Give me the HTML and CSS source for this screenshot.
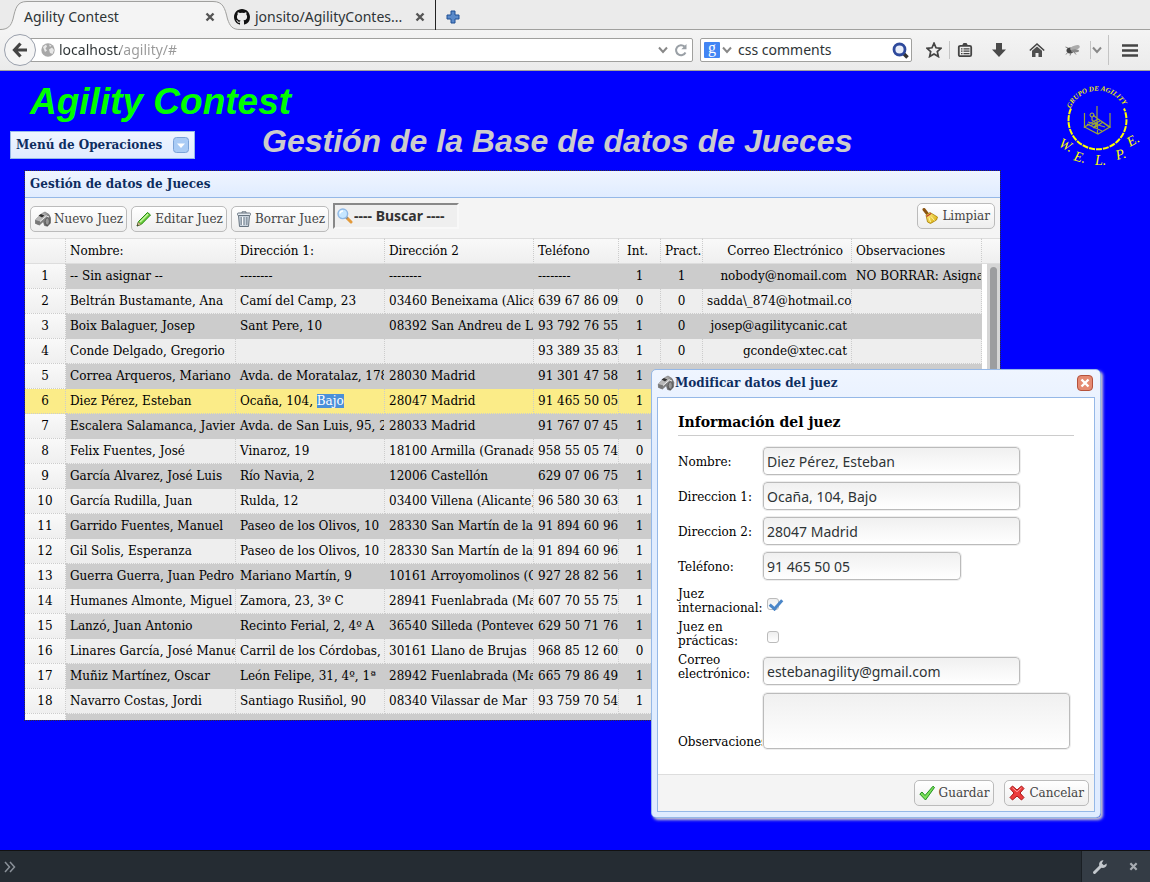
FILE: index.html
```html
<!DOCTYPE html>
<html lang="es">
<head>
<meta charset="utf-8">
<title>Agility Contest</title>
<link rel="stylesheet" href="styles.css">
</head>
<body>
<svg class="defs" aria-hidden="true">
  <defs>
    <linearGradient id="metal" x1="0" y1="0" x2="1" y2="1"><stop offset="0" stop-color="#e4e4e4"/><stop offset=".5" stop-color="#8a8a8a"/><stop offset="1" stop-color="#3a3a3a"/></linearGradient>
    <linearGradient id="gold" x1="0" y1="0" x2="1" y2="1"><stop offset="0" stop-color="#fff08a"/><stop offset="1" stop-color="#d6a800"/></linearGradient>
  </defs>
  <symbol id="whistle" viewBox="0 0 16 16">
    <path d="M.3 9 7 2.500 10 1 14 3.500 15.800 7.500 15.500 12 12.500 15.300 9.500 14.500 8.300 10.500 4.500 14 .5 12.500z" fill="url(#metal)" stroke="#666" stroke-width=".6"/>
    <path d="M.3 9 7 2.500 12 4.500 5 10.500z" fill="#b9b9b9"/>
    <path d="M.3 9 5 10.500 4.500 14 .5 12.500z" fill="#777"/>
    <path d="M3.500 4.500 6 3l3.500 1.500L7 6.500" fill="#333"/>
    <path d="M5 10.500 11.500 5 14 6" fill="none" stroke="#eee"/>
    <ellipse cx="12.300" cy="10.500" rx="2" ry="3.500" fill="#999" stroke="#555" stroke-width=".7"/>
  </symbol>
  <symbol id="pencil" viewBox="0 0 16 16">
    <path d="M1 15 2.500 10.500 11.500 1.500 14.500 4 5.500 13.200z" fill="#6cce3c" stroke="#248a10"/>
    <path d="M4 11 12 3" stroke="#c8f7a5" stroke-width="1.500"/>
    <path d="M1 15 2.300 11.200 4.900 13.500z" fill="#e8c89a" stroke="#7a6a50" stroke-width=".6"/>
    <path d="M1 15 1.600 13.200 2.900 14.300z" fill="#222"/>
  </symbol>
  <symbol id="trash" viewBox="0 0 16 16">
    <path d="M2.500 4.500h11l-1 11h-9z" fill="#c9d3dd" stroke="#66737f"/>
    <path d="M5.200 6v8M8 6v8M10.800 6v8" stroke="#7d8a97" stroke-width="1.200"/>
    <path d="M6.600 6v8" stroke="#fff"/>
    <rect x="1.500" y="2" width="13" height="2.500" rx="1" fill="#e4eaf0" stroke="#66737f"/>
    <path d="M6 2V.8h4V2" fill="none" stroke="#66737f"/>
  </symbol>
  <symbol id="lens" viewBox="0 0 16 16">
    <path d="M9.500 9.500 14 14" stroke="#e39a3b" stroke-width="3" stroke-linecap="round"/>
    <path d="M9 9 10.500 10.500" stroke="#888" stroke-width="2"/>
    <circle cx="5.800" cy="5.800" r="4.800" fill="#c6e6ff" stroke="#8fb8e6" stroke-width="1.400"/>
    <path d="M3 5.500a3 3 0 0 1 3-2.500" fill="none" stroke="#fff" stroke-width="1.400"/>
  </symbol>
  <symbol id="broom" viewBox="0 0 16 16">
    <path d="M2 1.500 5.500 6" stroke="#8a5310" stroke-width="3" stroke-linecap="round"/>
    <path d="M4 7 8 4.500 15.500 9 14.500 12 8.500 15.500 5.500 14z" fill="url(#gold)" stroke="#a87f00" stroke-width=".8"/>
    <path d="M4.500 8.500 9 5.500" stroke="#c0392b" stroke-width="1.400"/>
    <path d="M7 9.500 8.500 14M9 8.500 12.500 12.500" stroke="#fff5a8"/>
  </symbol>
  <symbol id="ok" viewBox="0 0 16 16">
    <path d="M.8 9 3 7 6 10.500 14 1.200 15.500 2.500 6.500 15z" fill="#7be05a" stroke="#1f8f1f"/>
  </symbol>
  <symbol id="cancel" viewBox="0 0 16 16">
    <path d="M3.500 1 8 5 12.500 1 15 3.500 11 8 15 12.500 12.500 15 8 11 3.500 15 1 12.500 5 8 1 3.500z" fill="#ec3b3b" stroke="#a81414"/>
    <path d="M3.500 2.800 8 6.800 12.500 2.800" fill="none" stroke="#ff9a9a"/>
  </symbol>
  <symbol id="close" viewBox="0 0 10 10"><path d="M1.500 1.500 8.500 8.500M8.500 1.500 1.500 8.500" stroke="currentColor" stroke-width="2.400"/></symbol>
  <symbol id="chevron" viewBox="0 0 10 8"><path d="M1 1.500 5 6 9 1.500" fill="none" stroke="#888" stroke-width="2"/></symbol>
</svg>
<div class="browser">
  <nav class="tabs" aria-label="Pestañas">
    <div class="tab tab-active">
      <svg class="tab-shape" viewBox="0 0 240 30" preserveAspectRatio="none"><path d="M0 29.500C8 29.500 11 26 13 19 15.500 8 17 1.500 27 1.500H213C223 1.500 225 8 227.500 19 230 26 232 29.500 240 29.500V30H0z" fill="#f4f4f4"/><path d="M0 29.500C8 29.500 11 26 13 19 15.500 8 17 1.500 27 1.500H213C223 1.500 225 8 227.500 19 230 26 232 29.500 240 29.500" fill="none" stroke="#a0a09e"/></svg>
      <span class="tab-title">Agility Contest</span>
      <button class="tab-close" aria-label="Cerrar pestaña"><svg width="10" height="10"><use href="#close"/></svg></button>
    </div>
    <div class="tab tab-back">
      <svg width="16" height="16" viewBox="0 0 16 16"><path d="M8 0C3.580 0 0 3.580 0 8c0 3.540 2.290 6.530 5.470 7.590.4.070.55-.17.55-.38v-1.490c-2.230.48-2.700-.96-2.700-.96-.36-.92-.89-1.170-.89-1.170-.73-.5.050-.49.050-.49.810.060 1.230.83 1.230.83.720 1.230 1.880.87 2.340.67.070-.52.280-.88.510-1.080-1.780-.2-3.640-.89-3.640-3.950 0-.87.310-1.590.82-2.150-.08-.2-.36-1.020.080-2.120 0 0 .67-.22 2.200.82a7.600 7.600 0 0 1 4 0c1.530-1.040 2.200-.82 2.200-.82.440 1.100.160 1.920.080 2.120.510.560.820 1.270.820 2.150 0 3.070-1.870 3.750-3.650 3.950.290.250.540.730.540 1.480v2.200c0 .21.150.46.550.38A8 8 0 0 0 16 8c0-4.420-3.580-8-8-8z" fill="#111"/></svg>
      <span class="tab-title">jonsito/AgilityContes...</span>
      <button class="tab-close" aria-label="Cerrar pestaña"><svg width="10" height="10"><use href="#close"/></svg></button>
    </div>
    <button class="tab-new" aria-label="Nueva pestaña"><svg width="14" height="14" viewBox="0 0 14 14"><path d="M5 1h4v4h4v4H9v4H5V9H1V5h4z" fill="#5b8ac9" stroke="#1f4f94"/></svg></button>
  </nav>
  <div class="navbar">
    <button class="back" aria-label="Atrás"><svg width="16" height="16" viewBox="0 0 16 16"><path d="M8.500 1.500 2.500 8l6 6.500M2.500 8H15" fill="none" stroke="#444" stroke-width="3.200"/></svg></button>
    <div class="urlbar">
      <svg width="14" height="14" viewBox="0 0 14 14"><circle cx="7" cy="7" r="6.700" fill="#a8a8a8"/><path d="M2 4 5 1.500 6 3.500 4.500 5.500 6 7.500 4 9 3 6.500zM8 6.500 11 4.500 13 7 11.500 11 9 10zM8 1.500 10.500 2.500 9 4z" fill="#e8e8e8"/></svg>
      <input class="url-text" type="text" value="localhost/agility/#" aria-label="Dirección">
      <svg width="10" height="8"><use href="#chevron"/></svg>
      <svg width="14" height="14" viewBox="0 0 14 14"><path d="M11.500 9.500A5 5 0 1 1 10.500 3.500" fill="none" stroke="#9aa0a6" stroke-width="2"/><path d="M12.500 1V6.200H7.300z" fill="#9aa0a6"/></svg>
    </div>
    <div class="searchbar">
      <span class="engine">g</span>
      <svg width="10" height="8"><use href="#chevron"/></svg>
      <input class="search-text" type="text" value="css comments" aria-label="Buscar en la web">
      <svg width="17" height="17" viewBox="0 0 17 17"><path d="M11 11 15.500 15.500" stroke="#333" stroke-width="3.500"/><circle cx="7.500" cy="7.500" r="5.500" fill="#e9eefa" stroke="#2e4a9c" stroke-width="2.800"/></svg>
    </div>
    <div class="tools">
      <button class="tool" aria-label="Marcador"><svg width="16" height="16" viewBox="0 0 16 16"><path d="M8 1.200 10 5.800 15 6.300 11.300 9.600 12.400 14.600 8 12 3.600 14.600 4.700 9.600 1 6.300 6 5.800z" fill="none" stroke="#444" stroke-width="1.700"/></svg></button>
      <span class="sep"></span>
      <button class="tool" aria-label="Lista"><svg width="16" height="16" viewBox="0 0 16 16"><rect x="1.800" y="3.800" width="12.400" height="10.400" rx="1.500" fill="#eee" stroke="#444" stroke-width="1.800"/><path d="M5 3.500 6.500 1h3L11 3.500z" fill="#444"/><path d="M4 6.800h1.500M4 9.200h1.500M4 11.600h1.500M6.500 6.800h6M6.500 9.200h6M6.500 11.600h6" stroke="#444" stroke-width="1.300"/></svg></button>
      <button class="tool tool-wide" aria-label="Descargas"><svg width="16" height="16" viewBox="0 0 16 16"><path d="M5 1h6v6.500h4L8 15 1 7.500h4z" fill="#4a4a4a"/></svg></button>
      <button class="tool tool-wide" aria-label="Inicio"><svg width="16" height="16" viewBox="0 0 16 16"><path d="M.8 8.500 8 2 15.200 8.500" fill="none" stroke="#444" stroke-width="1.600"/><path d="M3 8.800 8 4.500l5 4.300V15H9.500v-4h-3v4H3z" fill="#4f4f4f"/></svg></button>
      <button class="tool tool-bug" aria-label="Firebug"><svg width="16" height="12" viewBox="0 0 16 12"><ellipse cx="5" cy="6.500" rx="3.500" ry="3" fill="#444"/><ellipse cx="10" cy="3.800" rx="5" ry="2.200" fill="#aaa" transform="rotate(-18 10 4)"/><ellipse cx="10" cy="6.800" rx="4" ry="1.600" fill="#888"/><path d="M3 8 1 10.500M6 8.500 5 11.500M8.500 7.500 11 10.500M3 4 .5 3" stroke="#777" stroke-width=".9"/></svg></button>
      <span class="sep"></span>
      <button class="tool tool-narrow" aria-label="Más"><svg width="10" height="8"><use href="#chevron"/></svg></button>
      <span class="sep sep-tall"></span>
      <button class="tool tool-menu" aria-label="Menú"><svg width="16" height="13" viewBox="0 0 16 13"><path d="M0 1.500h16M0 6.500h16M0 11.500h16" stroke="#444" stroke-width="2.600"/></svg></button>
    </div>
  </div>

  <main class="page">
    <header class="banner">
      <h1 class="brand">Agility Contest</h1>
      <button class="menu-toggle">Menú de Operaciones
        <svg width="16" height="16" viewBox="0 0 16 16"><rect x=".5" y=".5" width="15" height="15" rx="3" fill="#a9cbf5" stroke="#7ba3d8"/><path d="M4 6.500h8L8 11z" fill="#fff"/></svg>
      </button>
      <h2 class="section-title">Gestión de la Base de datos de Jueces</h2>
      <svg class="logo" width="100" height="90" viewBox="0 0 100 90">
        <path id="ring" d="M20.500 27.500A29.500 29.500 0 0 1 76 31" fill="none"/>
        <text class="logo-arc"><textPath href="#ring">GRUPO DE AGILITY</textPath></text>
        <path d="M21 27.500A29 29 0 1 0 74 27.500" fill="none" stroke="#ff0" stroke-width="2" stroke-dasharray="6 1"/>
        <path d="M47 25v19M60 32v15M34.500 32v15M47.500 41v12M34.500 46 48 53 60 46 48 38zM37 43 52 50M38 41 55 46M43 34l5 4 3 2 8 6M42 36v3l5 4-4 4M44 47l9-6M40 45l10-5" fill="none" stroke="#9aa53a" stroke-width="1.200"/>
        <circle cx="42" cy="34" r="2" fill="none" stroke="#b5bf30"/>
        <g class="logo-word">
          <text transform="translate(8 65) rotate(28)">W.</text>
          <text transform="translate(23 79) rotate(16)">E.</text>
          <text transform="translate(45 84)">L.</text>
          <text transform="translate(67 79) rotate(-16)">P.</text>
          <text transform="translate(80 66) rotate(-30)">E.</text>
        </g>
      </svg>
    </header>

    <section class="panel">
      <h3 class="panel-title">Gestión de datos de Jueces</h3>
      <div class="toolbar">
        <button class="btn btn-low"><svg width="16" height="16"><use href="#whistle"/></svg>Nuevo Juez</button>
        <button class="btn btn-low"><svg width="16" height="16"><use href="#pencil"/></svg>Editar Juez</button>
        <button class="btn btn-low"><svg width="16" height="16"><use href="#trash"/></svg>Borrar Juez</button>
        <label class="finder"><svg width="16" height="16"><use href="#lens"/></svg><input type="text" value="---- Buscar ----" aria-label="Buscar"></label>
        <button class="btn btn-right"><svg width="16" height="16"><use href="#broom"/></svg>Limpiar</button>
      </div>
      <div class="grid">
        <table class="judges">
          <colgroup><col class="c-num"><col class="c-name"><col class="c-addr"><col class="c-addr"><col class="c-tel"><col class="c-flag"><col class="c-flag"><col class="c-addr"><col></colgroup>
          <thead><tr><th></th><th>Nombre:</th><th>Dirección 1:</th><th>Dirección 2</th><th>Teléfono</th><th class="mid">Int.</th><th class="mid">Pract.</th><th class="end">Correo Electrónico</th><th>Observaciones</th></tr></thead>
          <tbody>
            <tr><th>1</th><td>-- Sin asignar --</td><td>--------</td><td>--------</td><td>--------</td><td>1</td><td>1</td><td>nobody@nomail.com</td><td>NO BORRAR: Asignado</td></tr>
            <tr><th>2</th><td>Beltrán Bustamante, Ana</td><td>Camí del Camp, 23</td><td>03460 Beneixama (Alicante)</td><td>639 67 86 09</td><td>0</td><td>0</td><td class="long">sadda\_874@hotmail.com</td><td></td></tr>
            <tr><th>3</th><td>Boix Balaguer, Josep</td><td>Sant Pere, 10</td><td>08392 San Andreu de Llavaneres</td><td>93 792 76 55</td><td>1</td><td>0</td><td>josep@agilitycanic.cat</td><td></td></tr>
            <tr><th>4</th><td>Conde Delgado, Gregorio</td><td></td><td></td><td>93 389 35 83</td><td>1</td><td>0</td><td>gconde@xtec.cat</td><td></td></tr>
            <tr><th>5</th><td>Correa Arqueros, Mariano</td><td>Avda. de Moratalaz, 178</td><td>28030 Madrid</td><td>91 301 47 58</td><td>1</td><td></td><td></td><td></td></tr>
            <tr class="selected"><th>6</th><td>Diez Pérez, Esteban</td><td>Ocaña, 104, <mark>Bajo</mark></td><td>28047 Madrid</td><td>91 465 50 05</td><td>1</td><td></td><td></td><td></td></tr>
            <tr><th>7</th><td>Escalera Salamanca, Javier</td><td>Avda. de San Luis, 95, 2</td><td>28033 Madrid</td><td>91 767 07 45</td><td>1</td><td></td><td></td><td></td></tr>
            <tr><th>8</th><td>Felix Fuentes, José</td><td>Vinaroz, 19</td><td>18100 Armilla (Granada)</td><td>958 55 05 74</td><td>0</td><td></td><td></td><td></td></tr>
            <tr><th>9</th><td>García Alvarez, José Luis</td><td>Río Navia, 2</td><td>12006 Castellón</td><td>629 07 06 75</td><td>1</td><td></td><td></td><td></td></tr>
            <tr><th>10</th><td>García Rudilla, Juan</td><td>Rulda, 12</td><td>03400 Villena (Alicante)</td><td>96 580 30 63</td><td>1</td><td></td><td></td><td></td></tr>
            <tr><th>11</th><td>Garrido Fuentes, Manuel</td><td>Paseo de los Olivos, 10</td><td>28330 San Martín de la Vega</td><td>91 894 60 96</td><td>1</td><td></td><td></td><td></td></tr>
            <tr><th>12</th><td>Gil Solis, Esperanza</td><td>Paseo de los Olivos, 10</td><td>28330 San Martín de la Vega</td><td>91 894 60 96</td><td>1</td><td></td><td></td><td></td></tr>
            <tr><th>13</th><td>Guerra Guerra, Juan Pedro</td><td>Mariano Martín, 9</td><td>10161 Arroyomolinos (Cáceres)</td><td>927 28 82 56</td><td>1</td><td></td><td></td><td></td></tr>
            <tr><th>14</th><td>Humanes Almonte, Miguel</td><td>Zamora, 23, 3º C</td><td>28941 Fuenlabrada (Madrid)</td><td>607 70 55 75</td><td>1</td><td></td><td></td><td></td></tr>
            <tr><th>15</th><td>Lanzó, Juan Antonio</td><td>Recinto Ferial, 2, 4º A</td><td>36540 Silleda (Pontevedra)</td><td>629 50 71 76</td><td>1</td><td></td><td></td><td></td></tr>
            <tr><th>16</th><td>Linares García, José Manuel</td><td>Carril de los Córdobas, 8</td><td>30161 Llano de Brujas</td><td>968 85 12 60</td><td>0</td><td></td><td></td><td></td></tr>
            <tr><th>17</th><td>Muñiz Martínez, Oscar</td><td>León Felipe, 31, 4º, 1ª</td><td>28942 Fuenlabrada (Madrid)</td><td>665 79 86 49</td><td>1</td><td></td><td></td><td></td></tr>
            <tr><th>18</th><td>Navarro Costas, Jordi</td><td>Santiago Rusiñol, 90</td><td>08340 Vilassar de Mar</td><td>93 759 70 54</td><td>1</td><td></td><td></td><td></td></tr>
            <tr><th>19</th><td>Navarro Sanchez, Rafael</td><td>Castillo de Hidalgo</td><td>47012 Zaratan (Valladolid)</td><td></td><td></td><td></td><td></td><td></td></tr>
          </tbody>
        </table>
        <div class="scroll"><div class="track"><div class="thumb"></div></div></div>
      </div>
    </section>

    <section class="dialog" role="dialog" aria-labelledby="dlg-title">
      <header class="dialog-head">
        <svg width="18" height="16"><use href="#whistle"/></svg>
        <h3 id="dlg-title">Modificar datos del juez</h3>
        <button class="dialog-close" aria-label="Cerrar"><svg width="10" height="10"><use href="#close"/></svg></button>
      </header>
      <form class="dialog-body">
        <div class="fields">
          <h4 class="form-title">Información del juez</h4>
          <div class="row"><label for="f1">Nombre:</label><input class="box" id="f1" type="text" value="Diez Pérez, Esteban"></div>
          <div class="row"><label for="f2">Direccion 1:</label><input class="box" id="f2" type="text" value="Ocaña, 104, Bajo"></div>
          <div class="row"><label for="f3">Direccion 2:</label><input class="box" id="f3" type="text" value="28047 Madrid"></div>
          <div class="row"><label for="f4">Teléfono:</label><input class="box box-short" id="f4" type="text" value="91 465 50 05"></div>
          <div class="row row-check"><label for="f5">Juez internacional:</label><input class="check" id="f5" type="checkbox" checked></div>
          <div class="row row-check"><label for="f6">Juez en prácticas:</label><input class="check" id="f6" type="checkbox"></div>
          <div class="row row-mail"><label for="f7">Correo electrónico:</label><input class="box" id="f7" type="text" value="estebanagility@gmail.com"></div>
          <div class="row row-notes"><label for="f8">Observaciones:</label><textarea class="box box-notes" id="f8"></textarea></div>
        </div>
        <footer class="dialog-foot">
          <button type="button" class="btn"><svg width="16" height="16"><use href="#ok"/></svg>Guardar</button>
          <button type="button" class="btn"><svg width="16" height="16"><use href="#cancel"/></svg>Cancelar</button>
        </footer>
      </form>
    </section>
  </main>

  <footer class="devbar">
    <svg class="prompt" width="12" height="12" viewBox="0 0 12 12"><path d="M1 1 5.500 6 1 11M6 1l4.500 5L6 11" fill="none" stroke="#8a9199" stroke-width="1.500"/></svg>
    <div class="devtools">
      <button aria-label="Herramientas"><svg width="16" height="16" viewBox="0 0 16 16"><path d="M2.500 13.500 9 7" stroke="#c3c8cd" stroke-width="3" stroke-linecap="round"/><path d="M11.500 1.200 9.800 4.200 11.800 6.200 14.800 4.500A4 4 0 0 1 9 8.500L7.500 7A4 4 0 0 1 11.500 1.200z" fill="#c3c8cd"/></svg></button>
      <button class="dev-close" aria-label="Cerrar barra"><svg width="9" height="9"><use href="#close"/></svg></button>
    </div>
  </footer>
</div>
</body>
</html>
```
FILE: styles.css
```css
* { box-sizing: border-box; }
body {
  margin: 0;
  font: 12px/14px "DejaVu Serif", serif;
  color: #000;
}
h1, h2, h3, h4 { margin: 0; }
button, input, textarea { font: inherit; color: inherit; margin: 0; }
button { padding: 0; border: 0; background: none; }
svg { display: block; flex: none; }
.defs { position: absolute; width: 0; height: 0; }
.browser { display: flex; flex-direction: column; height: 100vh; }

/* Browser chrome */
.tabs {
  display: flex;
  height: 30px;
  background: linear-gradient(#ebebeb, #ebebeb 29px, #a0a09e 29px);
  font: 14px/20px "Noto Sans", sans-serif;
  color: #2e3436;
}
.tab { display: flex; align-items: center; padding-top: 3px; }
.tab-active { position: relative; width: 234px; padding-left: 24px; padding-right: 18px; }
.tab-shape { position: absolute; left: 0; top: 0; width: 240px; height: 30px; }
.tab-title { position: relative; flex: 1; white-space: nowrap; }
.tab-close { position: relative; color: #555; padding: 0 1px; }
.tab-back {
  width: 202px;
  gap: 5px;
  padding-right: 9px;
  border-right: 1px solid #222;
}
.tab-new { padding: 3px 10px 0; }
.navbar {
  display: flex;
  align-items: center;
  height: 41px;
  background: linear-gradient(#f4f4f4, #ebebeb);
  border-bottom: 1px solid #a0a09e;
  font: 14px/20px "Noto Sans", sans-serif;
  color: #2e3436;
}
.back {
  position: relative;
  display: grid;
  place-items: center;
  width: 32px;
  height: 32px;
  margin-left: 4px;
  border: 1px solid #9aa0ac;
  border-radius: 50%;
  background: #f5f5f5;
}
.urlbar, .searchbar {
  display: flex;
  align-items: center;
  height: 24px;
  background: #fff;
  border: 1px solid #a0a09e;
  border-radius: 0 2px 2px 0;
}
.urlbar { flex: 1; gap: 6px; margin-left: -6px; padding: 0 4px 0 10px; }
.urlbar input, .searchbar input {
  flex: 1;
  min-width: 0;
  padding: 0;
  border: 0;
  background: none;
  outline: 0;
}
.urlbar .url-text {
  margin-left: -2px;
  color: transparent;
  background: linear-gradient(90deg, #2e3436 61px, #999 61px);
  -webkit-background-clip: text;
  background-clip: text;
}
.searchbar { width: 212px; margin-left: 7px; padding: 0 2px 0 3px; gap: 2px; border-radius: 2px; }
.search-text { text-indent: 4px; }
.engine {
  width: 16px;
  height: 16px;
  border-radius: 1px;
  background: #4285f4;
  color: #fff;
  text-align: center;
  font: 16px/12px "Liberation Serif", serif;
}
.tools { display: flex; align-items: center; margin-left: 7px; }
.tool { display: grid; place-items: center; width: 30px; height: 24px; }
.tool-wide { width: 38px; }
.tool-bug { width: 34px; }
.tool-narrow { width: 12px; }
.tool-menu { width: 41px; }
.sep { width: 1px; height: 18px; background: #c4c4c4; }
.sep-tall { height: 30px; margin-left: 5px; }

/* Page */
.page {
  position: relative;
  display: flex;
  flex-direction: column;
  flex: 1;
  min-height: 0;
  padding: 10px 0 129px;
  background: #00f;
}
.banner {
  display: grid;
  grid-template-columns: 252px 1fr 100px;
  grid-template-rows: 42px 47px;
  padding-left: 10px;
}
.brand {
  grid-column: 1 / 3;
  padding-left: 20px;
  font: italic bold 37px/42px "Liberation Sans", sans-serif;
  color: #0f0;
}
.section-title {
  grid-area: 2 / 2;
  font: italic bold 32px/36px "Liberation Sans", sans-serif;
  color: #ccc;
}
.logo { grid-area: 1 / 3 / 3 / 4; }
.logo-arc { font: italic bold 7px "Liberation Serif", serif; fill: #ee0; }
.logo-word { font: italic 14px "Liberation Serif", serif; fill: #ff0; }
.menu-toggle {
  grid-area: 2 / 1;
  justify-self: start;
  display: flex;
  align-items: center;
  justify-content: space-between;
  width: 185px;
  height: 28px;
  margin-top: 8px;
  padding: 0 5px;
  border: 1px solid #95b8e7;
  background: linear-gradient(#eff5ff, #e0ecff);
  font: bold 12px/16px "DejaVu Serif", serif;
  color: #0e2d5f;
}

/* Data grid panel */
.panel {
  display: flex;
  flex-direction: column;
  flex: 1;
  min-height: 0;
  margin: 0 149px 0 24px;
  border: 1px dotted #333;
  background: #f4f4f4 padding-box;
  overflow: hidden;
}
.panel-title {
  flex: none;
  height: 27px;
  padding-left: 5px;
  background: linear-gradient(#eff5ff, #e0ecff);
  border-bottom: 1px solid #95b8e7;
  font: bold 12px/26px "DejaVu Serif", serif;
  color: #0e2d5f;
}
.toolbar {
  display: flex;
  align-items: flex-start;
  flex: none;
  gap: 4px;
  height: 40px;
  padding: 5px;
}
.btn {
  display: flex;
  align-items: center;
  gap: 4px;
  height: 26px;
  padding: 0 4px;
  border: 1px solid #bbb;
  border-radius: 5px;
  background: linear-gradient(#fff, #eee);
  color: #444;
}
.btn-low { gap: 3px; margin-top: 3px; padding-right: 3px; }
.btn-right { margin-left: auto; }
.finder {
  display: flex;
  align-items: center;
  width: 126px;
  height: 26px;
  padding: 0 2px;
  border: 2px solid;
  border-color: #888 #f8f8f8 #f8f8f8 #888;
  background: #efefef;
}
.finder input {
  flex: 1;
  min-width: 0;
  padding: 0 1px;
  border: 0;
  background: none;
  font: bold 14px/20px "Noto Sans", sans-serif;
  color: #333;
}
.grid { display: flex; flex: 1; min-height: 0; overflow: hidden; }
.judges {
  flex: 1;
  align-self: flex-start;
  width: 100%;
  table-layout: fixed;
  border-spacing: 0;
}
.c-num { width: 41px; }
.c-name { width: 170px; }
.c-addr { width: 149px; }
.c-tel { width: 85px; }
.c-flag { width: 42px; }
.judges th, .judges td {
  height: 25px;
  padding: 0 0 0 4px;
  border-right: 1px dotted #ccc;
  border-bottom: 1px dotted #ccc;
  font-weight: normal;
  text-align: left;
  white-space: nowrap;
  overflow: hidden;
}
.judges thead th {
  height: 26px;
  border-top: 1px solid #ddd;
  border-bottom: 1px solid #ddd;
  background: linear-gradient(#f9f9f9, #efefef);
}
.judges thead .mid { padding: 0 4px; }
.judges thead .mid:nth-child(6) { padding-left: 8px; }
.judges thead .end { padding-right: 8px; text-align: right; }
.judges tbody th {
  padding: 0;
  text-align: center;
  background: linear-gradient(#f9f9f9, #efefef);
}
.judges tbody td { background: #eee; }
.judges tbody tr:nth-child(odd) td { background: #ccc; }
.judges tbody .selected th, .judges tbody .selected td { background: #fbec88; }
.judges td:nth-child(6), .judges td:nth-child(7) { padding: 0; text-align: center; }
.judges td:nth-child(8) { padding-right: 4px; text-align: right; }
.judges td.long { padding-right: 0; text-align: left; }
mark { background: #4a90d9; color: #fff; }
.scroll {
  display: flex;
  width: 18px;
  padding: 26px 0 0 5px;
  background: linear-gradient(#ddd 1px, #f9f9f9 1px, #efefef 25px, #ddd 25px, #ddd 26px, #fff 26px);
}
.track { flex: 1; padding: 3px; background: #d5d5d5; }
.thumb { height: 80%; border-radius: 4px; background: #9c9d9f; }

/* Dialog */
.dialog {
  position: absolute;
  top: 298px;
  right: 49px;
  width: 450px;
  padding: 5px;
  border: 1px solid #95b8e7;
  border-radius: 5px;
  background: linear-gradient(#eff5ff, #e0ecff 20%);
  box-shadow: 2px 2px 3px #ccc;
}
.dialog-head { display: flex; align-items: center; height: 22px; padding: 0 2px 6px 0; }
.dialog-head h3 { flex: 1; font: bold 12px/16px "DejaVu Serif", serif; color: #0e2d5f; }
.dialog-close {
  display: grid;
  place-items: center;
  width: 16px;
  height: 16px;
  border: 1px solid #b5523c;
  border-radius: 4px;
  background: #e58a72;
  color: #fff;
}
.dialog-body { border: 1px solid #95b8e7; background: #fff; }
.fields { padding: 12px 20px 25px; }
.form-title {
  height: 26px;
  margin-bottom: 11px;
  border-bottom: 1px solid #ccc;
  font: bold 14px/24px "DejaVu Serif", serif;
}
.row { display: flex; align-items: center; margin-bottom: 7px; }
.row label { flex: none; width: 85px; padding-top: 1px; }
.box {
  width: 257px;
  height: 28px;
  padding: 0 3px;
  border: 1px solid #bbb;
  border-radius: 4px;
  background: linear-gradient(#f0f0f0, #fff);
  outline: 1px solid #eee;
  font: 14px/20px "Noto Sans", sans-serif;
  color: #2e3436;
}
.box-short { width: 198px; }
.box-notes { width: 307px; height: 56px; resize: none; }
.row-check { height: 26px; }
.check {
  appearance: none;
  align-self: flex-end;
  width: 12px;
  height: 12px;
  margin: 0 0 3px 4px;
  border: 1px solid #bbb;
  border-radius: 3px;
  background: linear-gradient(#eee, #fff);
}
.check:checked::after {
  content: "";
  display: block;
  width: 5px;
  height: 10px;
  margin: -2px 0 0 4px;
  border: solid #4a86c8;
  border-width: 0 3px 3px 0;
  transform: rotate(42deg);
}
.row-mail { height: 32px; align-items: flex-start; }
.row-mail label { padding-top: 0; }
.row-mail .box { align-self: flex-end; }
.row-notes { align-items: flex-end; margin: 8px 0 0; }
.row-notes label { overflow: hidden; }
.dialog-foot {
  display: flex;
  justify-content: flex-end;
  gap: 10px;
  padding: 5px;
  border-top: 1px solid #ddd;
  background: #f4f4f4;
}

/* Developer bar */
.devbar {
  display: flex;
  align-items: center;
  justify-content: space-between;
  height: 32px;
  padding-left: 4px;
  border-top: 1px solid #111;
  background: #252c33;
}
.devtools {
  display: flex;
  align-items: center;
  align-self: stretch;
  gap: 20px;
  padding: 0 11px 0 10px;
  border-left: 1px solid #1a1f24;
  background: #343c45;
}
.dev-close { color: #a8adb3; padding: 0 1px; }
```
